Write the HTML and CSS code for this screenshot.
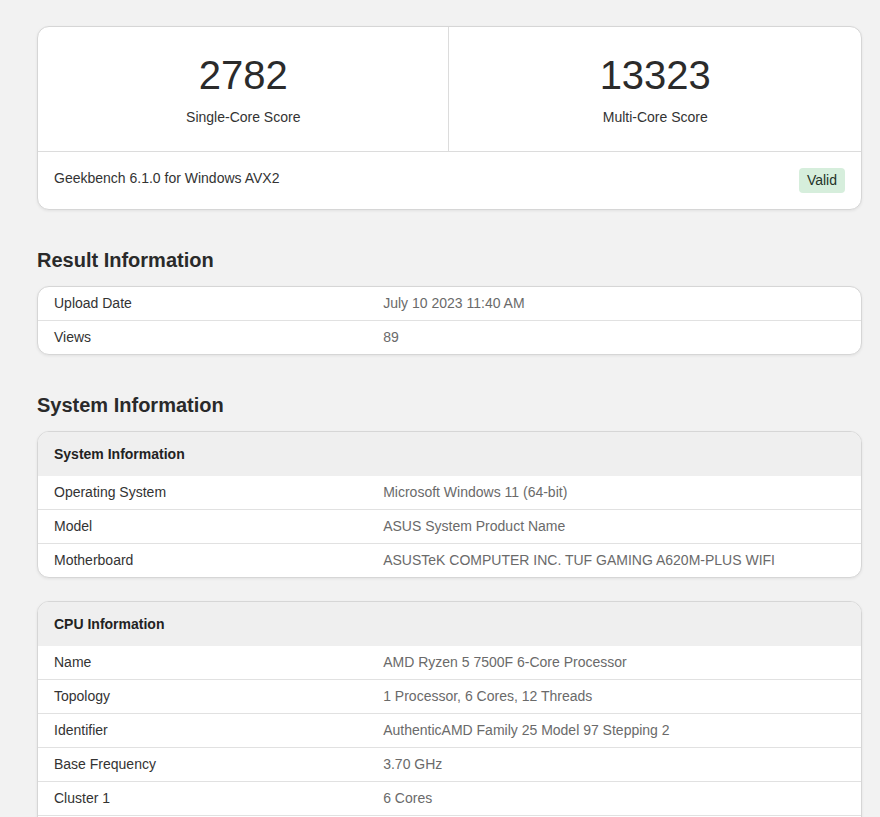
FILE: index.html
```html
<!DOCTYPE html>
<html lang="en">
<head>
<meta charset="utf-8">
<title>Geekbench Result</title>
<link rel="stylesheet" href="styles.css">
</head>
<body>
<main class="page">
  <section class="card score-card">
    <div class="scores">
      <div class="score">
        <div class="score-value">2782</div>
        <div class="score-label">Single-Core Score</div>
      </div>
      <div class="score">
        <div class="score-value">13323</div>
        <div class="score-label">Multi-Core Score</div>
      </div>
    </div>
    <div class="score-footer">
      <span class="version">Geekbench 6.1.0 for Windows AVX2</span>
      <span class="badge">Valid</span>
    </div>
  </section>

  <h2 class="section-title">Result Information</h2>
  <section class="card info">
    <div class="row"><div class="key">Upload Date</div><div class="val">July 10 2023 11:40 AM</div></div>
    <div class="row"><div class="key">Views</div><div class="val">89</div></div>
  </section>

  <h2 class="section-title">System Information</h2>
  <section class="card info">
    <div class="info-head">System Information</div>
    <div class="row"><div class="key">Operating System</div><div class="val">Microsoft Windows 11 (64-bit)</div></div>
    <div class="row"><div class="key">Model</div><div class="val">ASUS System Product Name</div></div>
    <div class="row"><div class="key">Motherboard</div><div class="val">ASUSTeK COMPUTER INC. TUF GAMING A620M-PLUS WIFI</div></div>
  </section>

  <section class="card info spaced">
    <div class="info-head">CPU Information</div>
    <div class="row"><div class="key">Name</div><div class="val">AMD Ryzen 5 7500F 6-Core Processor</div></div>
    <div class="row"><div class="key">Topology</div><div class="val">1 Processor, 6 Cores, 12 Threads</div></div>
    <div class="row"><div class="key">Identifier</div><div class="val">AuthenticAMD Family 25 Model 97 Stepping 2</div></div>
    <div class="row"><div class="key">Base Frequency</div><div class="val">3.70 GHz</div></div>
    <div class="row"><div class="key">Cluster 1</div><div class="val">6 Cores</div></div>
    <div class="row row-empty"></div>
  </section>
</main>
</body>
</html>
```

FILE: styles.css
```css
html {
  overflow: hidden;
}
body {
  margin: 0;
  background: #f2f2f2;
  font-family: "Liberation Sans", Arial, sans-serif;
  font-size: 14px;
  color: #333;
}
.page {
  padding: 26px 18px 40px 37px;
}
.card {
  background: #fff;
  border: 1px solid #d6d6d6;
  border-radius: 12px;
  box-shadow: 0 1px 3px rgba(0, 0, 0, 0.07);
  overflow: hidden;
}
.scores {
  display: grid;
  grid-template-columns: 410fr 412fr;
  border-bottom: 1px solid #dcdcdc;
}
.score {
  text-align: center;
  padding: 26px 16px 24px;
}
.score + .score {
  border-left: 1px solid #dcdcdc;
}
.score-value {
  font-size: 40px;
  line-height: 44px;
  color: #2b2b2b;
}
.score-label {
  margin-top: 10px;
  line-height: 20px;
  color: #333;
}
.score-footer {
  display: flex;
  justify-content: space-between;
  align-items: flex-start;
  padding: 16px 16px 16px;
}
.version {
  line-height: 20px;
  color: #333;
}
.badge {
  background: #d6eedc;
  color: #243328;
  border-radius: 4px;
  padding: 0 8px;
  line-height: 25px;
}
.section-title {
  margin: 38px 0 14px;
  font-size: 20px;
  line-height: 24px;
  font-weight: bold;
  color: #2a2a2a;
}
.info-head {
  background: #efefef;
  font-weight: bold;
  padding: 12px 16px;
  line-height: 20px;
  color: #222;
}
.row {
  display: grid;
  grid-template-columns: 40% 1fr;
}
.row + .row {
  border-top: 1px solid #e1e1e1;
}
.row-empty {
  height: 33px;
}
.key,
.val {
  padding: 7px 16px;
  line-height: 19px;
}
.key {
  color: #333;
}
.val {
  color: #6a6a6a;
}
.spaced {
  margin-top: 23px;
}
```
